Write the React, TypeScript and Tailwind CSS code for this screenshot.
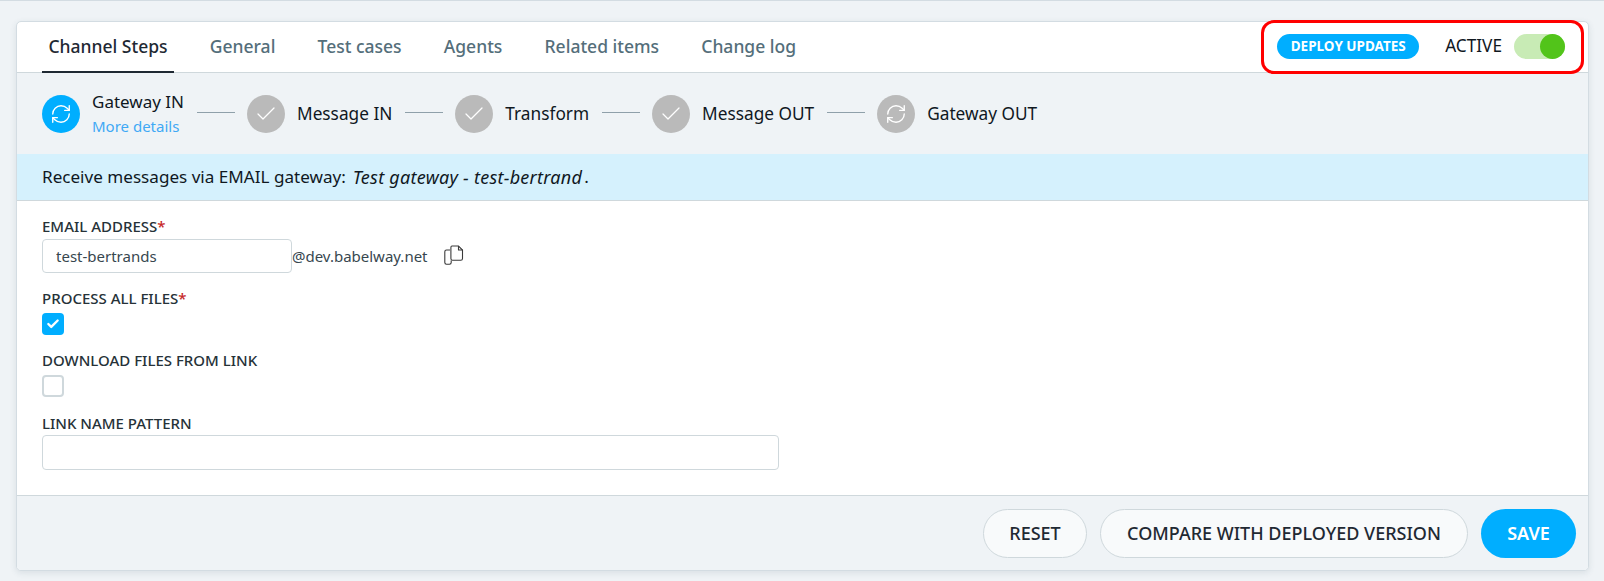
import { Check, RefreshCw } from 'lucide-react';

const tabs = ['Channel Steps', 'General', 'Test cases', 'Agents', 'Related items', 'Change log'];

const StepLine = () => <div className="mt-[-2px] ml-[13px] mr-[12px] h-px w-[38px] bg-[#8fa0aa]" />;

const StepCircle = ({ active, sync }: { active?: boolean; sync?: boolean }) => (
  <div
    className={`flex h-[38px] w-[38px] shrink-0 items-center justify-center rounded-full text-white ${
      active ? 'bg-[#00aeff]' : 'bg-[#bababa]'
    }`}
  >
    {sync ? <RefreshCw size={22} strokeWidth={1.5} /> : <Check size={24} strokeWidth={1.25} />}
  </div>
);

const Step = ({ label, sync }: { label: string; sync?: boolean }) => (
  <div className="flex items-center gap-3">
    <StepCircle sync={sync} />
    <span className="text-[17.25px] text-[#10181f]">{label}</span>
  </div>
);

const Label = ({ text, required }: { text: string; required?: boolean }) => (
  <div className="text-[15px] font-medium leading-[19px] text-[#263238]">
    {text}
    {required && <span className="text-[#c62828]">*</span>}
  </div>
);

const CopyIcon = () => (
  <svg width="21" height="21" viewBox="0 0 21 21" fill="none" stroke="#3a3a3a" strokeWidth="1.1">
    <path d="M7 5H3.5C2.5 5 1.8 5.7 1.8 6.7V17.5C1.8 18.5 2.5 19.2 3.5 19.2H6.5C7.6 19.2 8.2 18.5 8.2 17.5V15.5" />
    <path d="M9 1H15.5L19.5 5V13.5C19.5 14.8 18.8 15.3 17.8 15.3H9.5C8.5 15.3 7.9 14.8 7.9 13.5V2.5C7.9 1.5 8.3 1 9 1Z" />
    <path d="M15.5 1V5H19.5" />
  </svg>
);

export default function App() {
  return (
    <div className="relative h-[581px] w-[1604px] overflow-hidden border-t border-[#d3dce2] bg-[#eff3f6] px-[16px] pt-[20px] font-['Noto_Sans',sans-serif]">
      <div className="flex h-[550px] w-[1573px] flex-col overflow-hidden rounded-[5px] border border-[#d3dce2] bg-white shadow-[0_2px_6px_rgba(60,80,100,0.12)]">
        {/* tabs */}
        <div className="flex h-[51px] shrink-0 items-stretch justify-between border-b border-[#cfd8dc] pl-[25px] pr-[23px]">
          <div className="flex gap-[29.2px]">
            {tabs.map((t, i) => (
              <div
                key={t}
                className={`px-[6.5px] pt-[11px] text-[17.5px] font-medium ${
                  i === 0 ? 'border-b-2 border-[#1f2933] text-[#1f2933] mb-[-1px]' : 'text-[#546e7a]'
                }`}
              >
                {t}
              </div>
            ))}
          </div>
          <div className="flex items-center pb-[2px]">
            <div className="flex h-[25px] w-[142px] items-center justify-center rounded-full bg-[#00aeff] text-[13.5px] font-bold text-white">
              DEPLOY UPDATES
            </div>
            <span className="ml-[26px] text-[17.2px] text-[#10181f]">ACTIVE</span>
            <div className="ml-[12px] flex h-[25px] w-[51px] justify-end rounded-full bg-[#c8ebb5]">
              <div className="h-[25px] w-[25px] rounded-full bg-[#52c41a]" />
            </div>
          </div>
        </div>

        {/* steps */}
        <div className="flex h-[81px] shrink-0 items-center bg-[#eff3f6] pl-[25px]">
          <div className="flex items-center gap-3">
            <StepCircle active sync />
            <div className="flex flex-col">
              <span className="text-[17px] leading-[24px] text-[#10181f]">Gateway IN</span>
              <span className="text-[15px] leading-[24px] text-[#3fa9f5]">More details</span>
            </div>
          </div>
          <StepLine />
          <Step label="Message IN" />
          <StepLine />
          <Step label="Transform" />
          <StepLine />
          <Step label="Message OUT" />
          <StepLine />
          <Step label="Gateway OUT" sync />
        </div>

        {/* info */}
        <div className="flex h-[47px] shrink-0 items-center border-b border-[#cfd8dc] bg-[#d5f1fd] pl-[25px] text-[17.1px] text-[#10181f]">
          <span>Receive messages via EMAIL gateway:</span>
          <i className="ml-[7px] text-[18px] tracking-[0.27px]">Test gateway - test-bertrand</i>
          <span className="ml-[2px]">.</span>
        </div>

        {/* form */}
        <div className="flex flex-1 flex-col bg-white pl-[25px] pt-[16px]">
          <Label text="EMAIL ADDRESS" required />
          <div className="mt-[3px] flex items-center">
            <input
              readOnly
              value="test-bertrands"
              className="h-[34px] w-[250px] rounded border border-[#cfd8dc] px-[13px] text-[15px] text-[#37474f] outline-none"
            />
            <span className="text-[15px] text-[#37474f]">@dev.babelway.net</span>
            <span className="ml-[15px] mb-[2px]">
              <CopyIcon />
            </span>
          </div>

          <div className="mt-[16px]">
            <Label text="PROCESS ALL FILES" required />
          </div>
          <div className="mt-[5px] flex h-[22px] w-[22px] items-center justify-center rounded bg-[#00aeff] text-white">
            <Check size={14} strokeWidth={4} />
          </div>

          <div className="mt-[16px]">
            <Label text="DOWNLOAD FILES FROM LINK" />
          </div>
          <div className="mt-[5px] h-[22px] w-[22px] rounded border-2 border-[#cfd8dc] bg-white" />

          <div className="mt-[17px]">
            <Label text="LINK NAME PATTERN" />
          </div>
          <input readOnly className="mt-[2px] h-[35px] w-[737px] rounded border border-[#cfd8dc] outline-none" />
        </div>

        {/* footer */}
        <div className="flex h-[75px] shrink-0 items-start justify-end gap-[13px] border-t border-[#cfd8dc] bg-[#eff3f6] pr-[12px] pt-[13px]">
          <button className="h-[49px] w-[104px] rounded-full border border-[#cfd8dc] bg-[#f8fafb] text-[18px] font-medium text-[#1f2933]">
            RESET
          </button>
          <button className="h-[49px] w-[368px] rounded-full border border-[#cfd8dc] bg-[#f8fafb] text-[18px] font-medium text-[#1f2933]">
            COMPARE WITH DEPLOYED VERSION
          </button>
          <button className="h-[49px] w-[95px] rounded-full bg-[#00aeff] text-[18px] font-semibold text-white">SAVE</button>
        </div>
      </div>

      {/* red highlight drawn over the screenshot */}
      <div className="absolute left-[1261px] top-[19px] h-[54px] w-[323px] rounded-[13px] border-[3.5px] border-[#ff0000]" />
    </div>
  );
}
